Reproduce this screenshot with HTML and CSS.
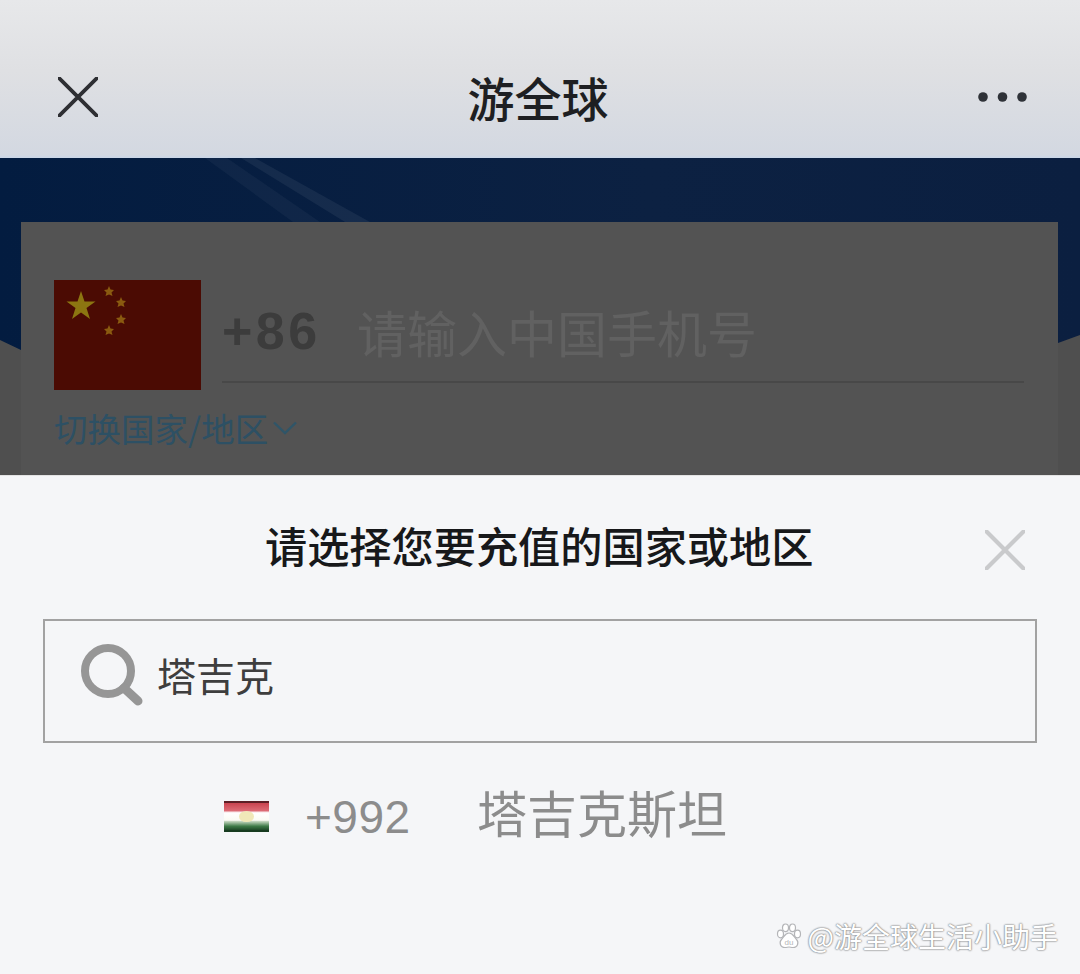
FILE: index.html
```html
<!DOCTYPE html>
<html lang="zh-CN">
<head>
    <meta charset="UTF-8">
    <meta name="viewport" content="width=device-width, initial-scale=1.0">
    <title>游全球</title>
    <link rel="stylesheet" href="styles.css">
</head>
<body>
    <header class="topbar">
        <svg class="topbar-close" width="40" height="40" viewBox="0 0 40 40"><path d="M1 1L39 39M39 1L1 39" stroke="#2e2f33" stroke-width="3.800" stroke-linecap="round"/></svg>
        <h1 class="topbar-title">游全球</h1>
        <svg class="topbar-more" width="49" height="10" viewBox="0 0 49 10"><circle cx="5" cy="5" r="4.800" fill="#2f3238"/><circle cx="24.500" cy="5" r="4.800" fill="#2f3238"/><circle cx="44" cy="5" r="4.800" fill="#2f3238"/></svg>
    </header>

    <section class="hero">
        <svg class="hero-streak" width="180" height="64" viewBox="0 0 180 64"><polygon points="0,0 22,0 115,64 88,64" fill="#fff" opacity=".04"/><polygon points="36,0 50,0 165,64 140,64" fill="#fff" opacity=".06"/></svg>
        <div class="card">
            <div class="phone-row">
                <svg class="flag-cn" width="147" height="110" viewBox="0 0 147 110">
                    <rect width="147" height="110" fill="#4b0b03"/>
                    <polygon points="27,11 30.500,21.500 41.500,21.500 32.500,28 36,39 27,32.500 18,39 21.500,28 12.500,21.500 23.500,21.500" fill="#8c7611"/>
                    <polygon points="55,6 56.500,9.500 60,10 57.500,12.500 58.500,16 55,14.500 51.500,16 52.500,12.500 50,10 53.500,9.500" fill="#8a5a10"/>
                    <polygon points="67,17 68.500,20.500 72,21 69.500,23.500 70.500,27 67,25.500 63.500,27 64.500,23.500 62,21 65.500,20.500" fill="#8a5a10"/>
                    <polygon points="67,34 68.500,37.500 72,38 69.500,40.500 70.500,44 67,42.500 63.500,44 64.500,40.500 62,38 65.500,37.500" fill="#8a5a10"/>
                    <polygon points="55,45 56.500,48.500 60,49 57.500,51.500 58.500,55 55,53.500 51.500,55 52.500,51.500 50,49 53.500,48.500" fill="#8a5a10"/>
                </svg>
                <div class="phone-field">
                    <span class="phone-code">+86</span>
                    <span class="phone-hint">请输入中国手机号</span>
                </div>
            </div>
            <div class="switch-link">
                切换国家/地区
                <svg width="24" height="14" viewBox="0 0 24 14"><path d="M1 1.500L12 12L23 1.500" fill="none" stroke="#2f5568" stroke-width="2.400"/></svg>
            </div>
        </div>
    </section>

    <section class="sheet">
        <div class="sheet-head">
            <h2 class="sheet-title">请选择您要充值的国家或地区</h2>
            <svg class="sheet-close" width="40" height="40" viewBox="0 0 40 40"><path d="M1.500 1.500L38.500 38.500M38.500 1.500L1.500 38.500" stroke="#c9cacc" stroke-width="4.200" stroke-linecap="round"/></svg>
        </div>
        <div class="search-box">
            <svg width="62" height="62" viewBox="0 0 62 62"><circle cx="27" cy="27" r="23" fill="none" stroke="#969696" stroke-width="8"/><path d="M43 44L57 57" stroke="#969696" stroke-width="9" stroke-linecap="round"/></svg>
            <span class="search-text">塔吉克</span>
        </div>
        <div class="result-row">
            <div class="flag-tj"><span class="flag-tj-crown"></span></div>
            <span class="result-code">+992</span>
            <span class="result-name">塔吉克斯坦</span>
        </div>
        <div class="watermark">
            <svg width="26" height="26" viewBox="0 0 26 26">
                <g fill="#fff" stroke="#b4b5b8" stroke-width="1.200">
                    <ellipse cx="4.500" cy="11" rx="3" ry="3.800"/>
                    <ellipse cx="9.500" cy="4.800" rx="3" ry="3.800"/>
                    <ellipse cx="16.500" cy="4.800" rx="3" ry="3.800"/>
                    <ellipse cx="21.500" cy="11" rx="3" ry="3.800"/>
                    <path d="M13 10C9 10 8 14 5.500 16.500C3 19 4 24.500 9 24.500C11 24.500 11.500 24 13 24C14.500 24 15 24.500 17 24.500C22 24.500 23 19 20.500 16.500C18 14 17 10 13 10Z"/>
                </g>
                <text x="13" y="21.500" text-anchor="middle" font-size="8" fill="#b4b5b8" font-family="Liberation Sans, sans-serif">du</text>
            </svg>
            <span class="watermark-text">@游全球生活小助手</span>
        </div>
    </section>
</body>
</html>
```
FILE: styles.css
```css
* { box-sizing: border-box; }
html, body { margin: 0; height: 974px; overflow: hidden; }
body { font-family: "Noto Sans CJK SC", "Liberation Sans", sans-serif; background: #f5f6f8; }
h1, h2 { margin: 0; }

.topbar { height: 158px; padding: 35px 58px 0 54px; display: grid; grid-template-columns: 1fr auto 1fr; align-items: center; background: linear-gradient(#e7e8ea, #dfe0e3 45%, #d3d8e1 98%, #c9d6e8); }
.topbar-close { margin-left: 4px; }
.topbar-title { font-size: 47px; font-weight: 500; line-height: 60px; color: #1e1f22; }
.topbar-more { justify-self: end; margin-right: -5px; }

.hero { position: relative; height: 317px; padding: 64px 22px 0 21px; background: linear-gradient(90deg, #031c40, #0c2142 60%, #0b1f40); }
/* grey shape under the card, the navy ribbon ends in a slant on both sides */
.hero::before { content: ""; position: absolute; left: 0; right: 0; bottom: 0; height: 140px; background: #4f4f4f; clip-path: polygon(0 5px, 21px 15px, 1058px 8px, 100% 0, 100% 100%, 0 100%); }
.hero-streak { position: absolute; left: 205px; top: 0; }
.card { position: relative; height: 253px; padding: 58px 34px 0 33px; background: #535353; }
.phone-row { display: flex; align-items: flex-start; gap: 21px; }
.flag-cn { flex: none; }
.phone-field { flex: 1; height: 103px; display: flex; align-items: center; gap: 38px; border-bottom: 2px solid #484848; }
.phone-code { width: 97px; font-family: "Liberation Sans", sans-serif; font-size: 52px; font-weight: 700; letter-spacing: 3.500px; color: #3c3c3c; white-space: nowrap; }
.phone-hint { font-size: 50px; line-height: 60px; color: #616161; }
.switch-link { display: flex; align-items: center; gap: 5px; margin: 16px 0 0; font-size: 33.500px; line-height: 44px; color: #2d5064; white-space: nowrap; }

.sheet { height: 499px; padding: 0 43px; border-top: 1px solid #e3e3e3; background: #f5f6f8; }
.sheet-head { height: 143px; display: flex; align-items: center; justify-content: space-between; padding: 0 12px 0 222px; }
.sheet-title { margin-bottom: 6px; font-size: 42.200px; font-weight: 500; line-height: 60px; color: #17181a; white-space: nowrap; }
.sheet-close { margin-top: 4px; }
.search-box { height: 124px; display: flex; align-items: center; gap: 14px; padding: 0 0 12px 36px; border: 2px solid #a2a2a2; }
.search-text { margin-bottom: 2px; font-size: 39px; line-height: 50px; color: #3e3e3e; }
.result-row { height: 144px; display: flex; align-items: center; padding-left: 181px; color: #8c8c8c; }
.flag-tj { position: relative; width: 45px; height: 31px; margin: 2px 36px 0 0; border-top: 2px solid #5c1f26; border-bottom: 2px solid #173b20; background: linear-gradient(#c9434f, #dc6a74 28%, #fff 36%, #fbfbf4 64%, #c3d6bf 68%, #3d7a47 86%, #1f4a29); }
.flag-tj-crown { position: absolute; left: 15px; top: 8px; width: 15px; height: 11px; border-radius: 50%; background: #f0e8b8; }
.result-code { width: 172px; font-family: "Liberation Sans", sans-serif; font-size: 46px; letter-spacing: .5px; padding-top: 4px; }
.result-name { margin-bottom: 8px; font-size: 50px; line-height: 60px; }
.watermark { display: flex; align-items: center; justify-content: flex-end; gap: 6px; margin: 31px -21px 0 0; }
.watermark-text { font-size: 28px; line-height: 36px; color: #fff; text-shadow: 0 0 2px #8f9092, 0 0 2px #8f9092, 0 0 1px #8f9092; }
```
